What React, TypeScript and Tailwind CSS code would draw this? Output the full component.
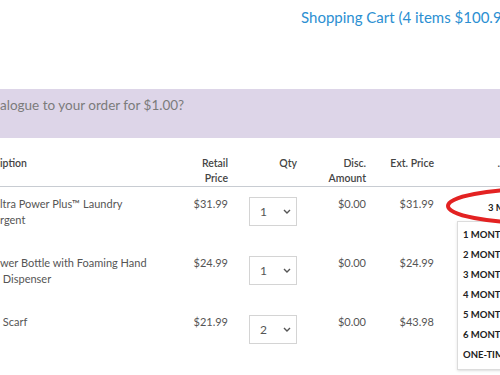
const rows = [
  { lines: ["ltra Power Plus™ Laundry", "rgent"], price: "$31.99", qty: 1, disc: "$0.00", ext: "$31.99" },
  { lines: ["wer Bottle with Foaming Hand", " Dispenser"], price: "$24.99", qty: 1, disc: "$0.00", ext: "$24.99" },
  { lines: [" Scarf"], price: "$21.99", qty: 2, disc: "$0.00", ext: "$43.98" },
];

const frequencies = ["1 MONTH", "2 MONTHS", "3 MONTHS", "4 MONTHS", "5 MONTHS", "6 MONTHS", "ONE-TIME"];

function QtySelect({ value }: { value: number }) {
  return (
    <div className="ml-auto flex h-[29px] w-[48px] items-center justify-between border border-[#d4d4d4] bg-white pl-[10px] pr-[5px] text-[12px] text-[#555]">
      <span>{value}</span>
      <svg width="8" height="5" viewBox="0 0 8 5" fill="none">
        <path d="M1 1l3 3 3-3" stroke="#555" strokeWidth="1.4" />
      </svg>
    </div>
  );
}

export default function App() {
  return (
    <div className="relative h-[375px] w-[500px] overflow-hidden bg-white font-['Lato','Liberation_Sans',sans-serif]">
      {/* Top bar */}
      <div className="h-[89px] whitespace-nowrap pl-[301px] pt-[6px] text-[15px] text-[#2b8fd2]">
        Shopping Cart (4 items $100.96)
      </div>

      {/* Catalogue offer */}
      <div className="h-[49px] whitespace-nowrap bg-[#ddd5e8] pt-[6px] text-[13.5px] text-[#7b7b7b]">
        alogue to your order for $1.00?
      </div>

      {/* Table header */}
      <div className="mt-[18px] flex border-b border-[#c8ccd2] text-[10.5px] font-semibold leading-[15px] text-[#444]">
        <div className="w-[160px] shrink-0">iption</div>
        <div className="w-[68px] shrink-0 text-right">Retail<br />Price</div>
        <div className="w-[69px] shrink-0 text-right">Qty</div>
        <div className="w-[69px] shrink-0 text-right">Disc.<br />Amount</div>
        <div className="w-[68px] shrink-0 text-right">Ext. Price</div>
        <div className="w-[66px] shrink-0 text-right">.</div>
      </div>

      {/* Rows */}
      {rows.map((row, i) => (
        <div key={i} className="flex h-[59px] pt-[9px] text-[11px] leading-[16px] text-[#555]">
          <div className="w-[160px] shrink-0 whitespace-pre">
            {row.lines.map((l) => (
              <div key={l}>{l}</div>
            ))}
          </div>
          <div className="w-[68px] shrink-0 text-right">{row.price}</div>
          <div className="mt-[1px] w-[69px] shrink-0">
            <QtySelect value={row.qty} />
          </div>
          <div className="w-[69px] shrink-0 text-right">{row.disc}</div>
          <div className="w-[68px] shrink-0 text-right">{row.ext}</div>
          <div className="relative w-[66px] shrink-0">
            {i === 0 && (
              <>
                <div className="whitespace-nowrap pl-[54px] pt-[4px] text-[9.5px] font-bold text-[#222]">3 MONTHS</div>
                <div className="absolute left-[23px] top-[25px] w-[80px] border border-[#dcdcdc] bg-white pb-[4px] pt-[3px] shadow-sm">
                  {frequencies.map((f) => (
                    <div key={f} className="h-[20px] whitespace-nowrap pl-[5px] text-[9.5px] font-bold leading-[20px] text-[#222]">
                      {f}
                    </div>
                  ))}
                </div>
              </>
            )}
          </div>
        </div>
      ))}

      {/* Red circle annotation */}
      <svg className="absolute left-[440px] top-[184px] overflow-visible" width="60" height="45" viewBox="0 0 60 45" fill="none">
        <ellipse cx="98" cy="22" rx="90" ry="17" stroke="#e32222" strokeWidth="4" />
      </svg>
    </div>
  );
}
